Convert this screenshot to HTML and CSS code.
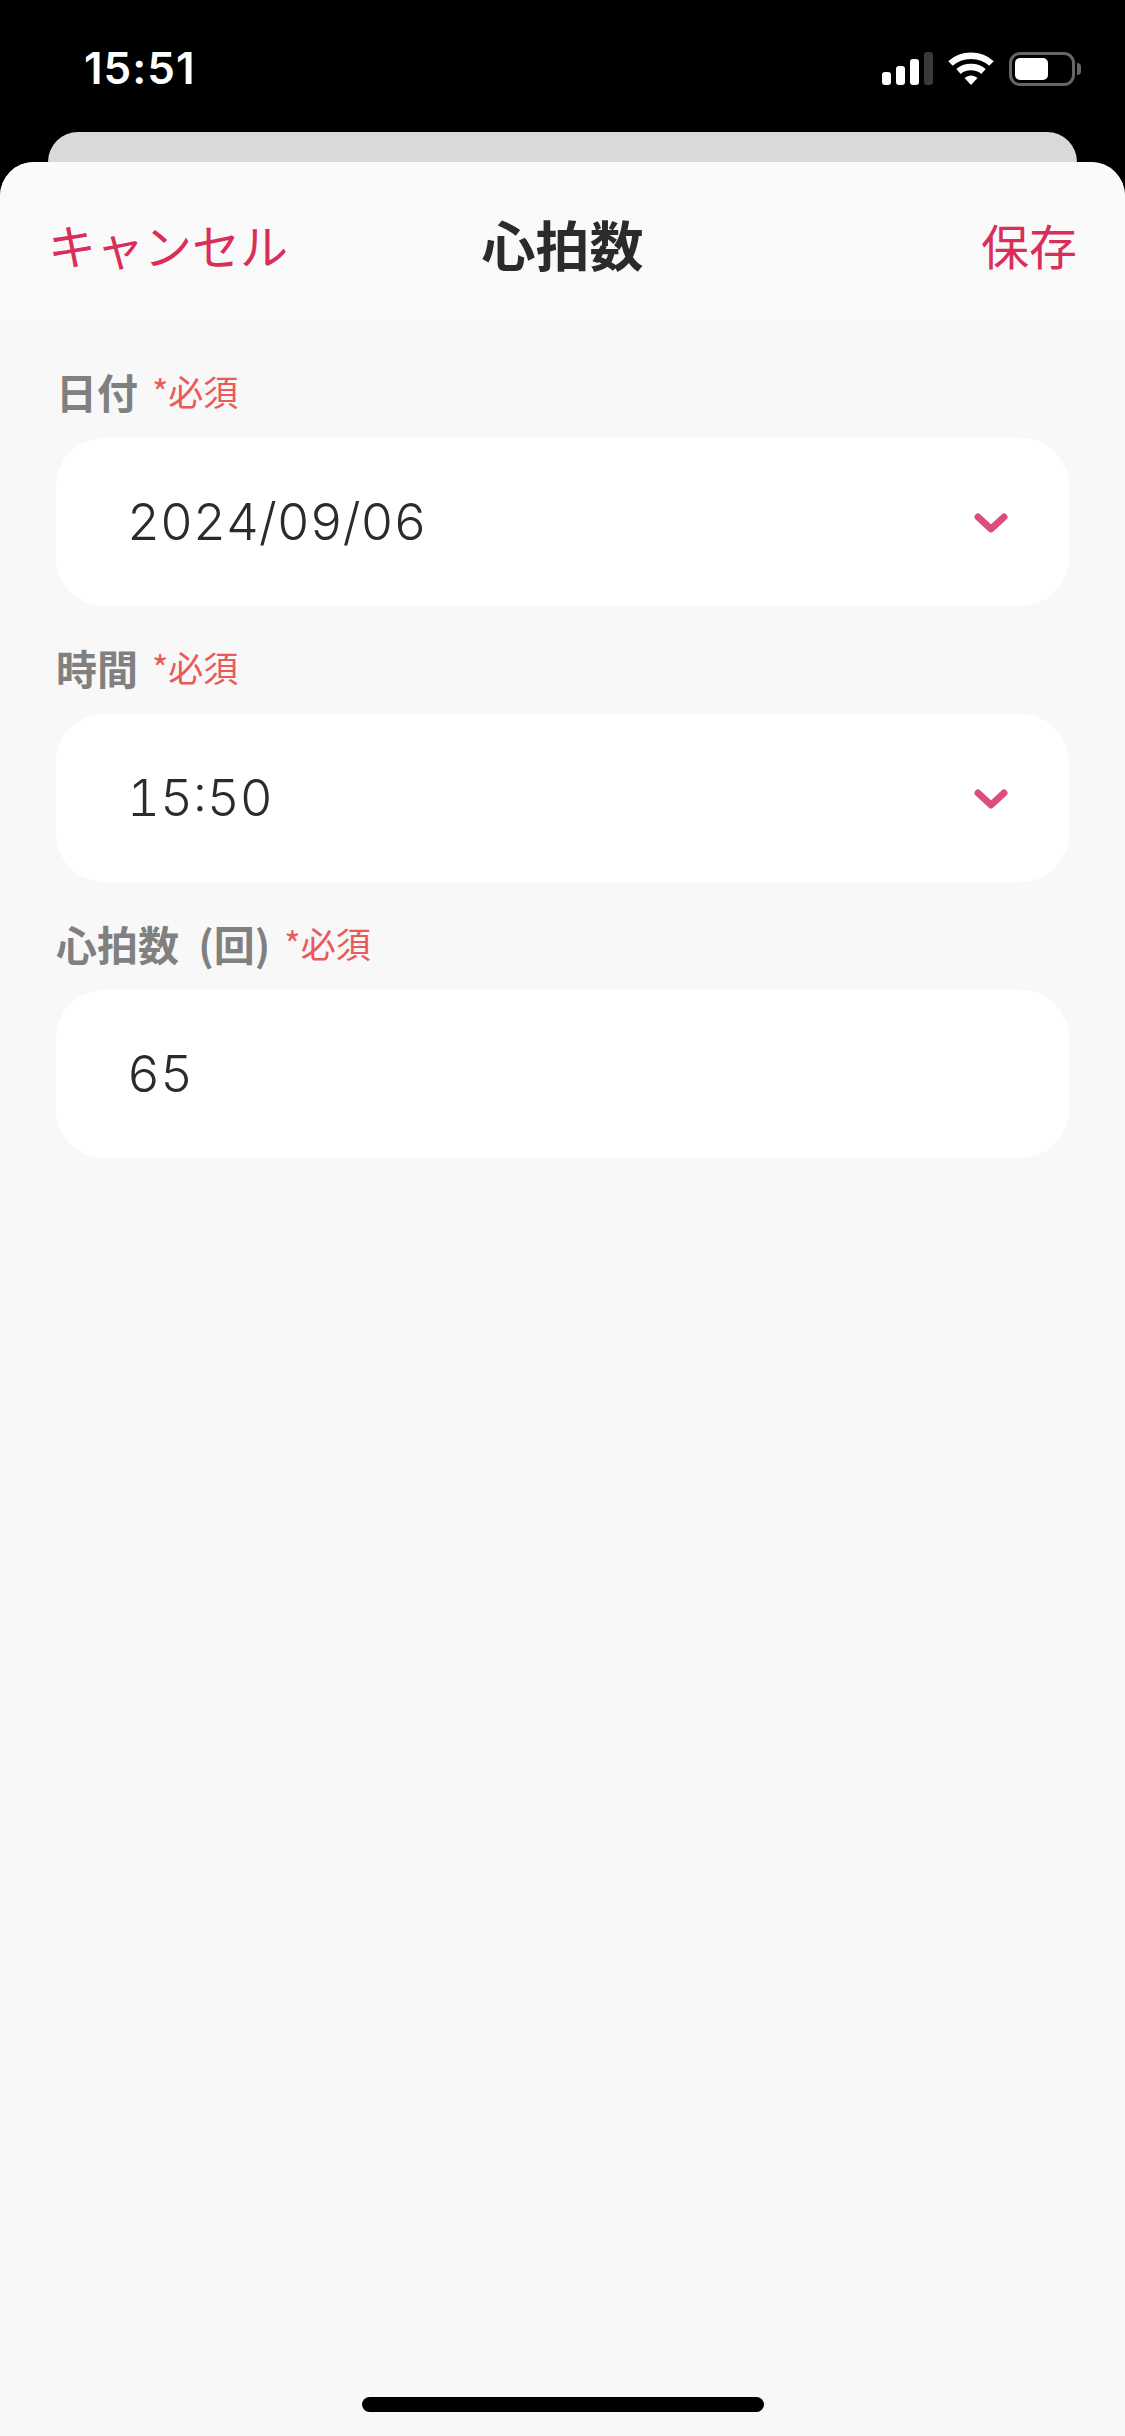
FILE: index.html
```html
<!DOCTYPE html>
<html lang="ja">
<head>
  <meta charset="utf-8">
  <title>心拍数</title>
  <link rel="stylesheet" href="styles.css">
</head>
<body>
  <div class="status">
    <span class="time">15:51</span>
    <div class="status-icons">
      <svg class="signal" width="51" height="33" viewBox="0 0 51 33">
        <rect x="0" y="20" width="9" height="13" rx="3" fill="#fff"/>
        <rect x="14" y="14" width="9" height="19" rx="3" fill="#fff"/>
        <rect x="28" y="7" width="9" height="26" rx="3" fill="#fff"/>
        <rect x="42" y="0" width="9" height="33" rx="3" fill="#3a3a3a"/>
      </svg>
      <svg class="wifi" width="46" height="33" viewBox="0 0 46 33">
        <path d="M2.500 11.500C13.500 1 32.500 1 43.500 11.500" fill="none" stroke="#fff" stroke-width="6.500"/>
        <path d="M10.500 19.500C17 13.500 29 13.500 35.500 19.500" fill="none" stroke="#fff" stroke-width="6.500"/>
        <path d="M16.500 26L23 33L29.500 26C25.500 22.500 20.500 22.500 16.500 26Z" fill="#fff"/>
      </svg>
      <div class="battery">
        <div class="battery-body"><div class="battery-level"></div></div>
        <div class="battery-tip"></div>
      </div>
    </div>
  </div>

  <div class="back-card"></div>

  <div class="sheet">
    <div class="sheet-head">
      <span class="head-btn">キャンセル</span>
      <span class="head-title">心拍数</span>
      <span class="head-btn head-save">保存</span>
    </div>

    <div class="form">
      <div class="field">
        <div class="label">日付<span class="req">*必須</span></div>
        <div class="box">
          <span class="value">2024/09/06</span>
          <svg class="chevron" width="34" height="21" viewBox="0 0 34 21">
            <path d="M4 4L17 16L30 4" fill="none" stroke="#dc4d7c" stroke-width="7" stroke-linecap="round" stroke-linejoin="round"/>
          </svg>
        </div>
      </div>
      <div class="field">
        <div class="label">時間<span class="req">*必須</span></div>
        <div class="box">
          <span class="value">15:50</span>
          <svg class="chevron" width="34" height="21" viewBox="0 0 34 21">
            <path d="M4 4L17 16L30 4" fill="none" stroke="#dc4d7c" stroke-width="7" stroke-linecap="round" stroke-linejoin="round"/>
          </svg>
        </div>
      </div>
      <div class="field">
        <div class="label">心拍数 (回)<span class="req">*必須</span></div>
        <div class="box">
          <span class="value">65</span>
        </div>
      </div>
    </div>

    <div class="home-bar"></div>
  </div>
</body>
</html>
```

FILE: styles.css
```css
html, body{
  margin: 0;
  height: 2436px;
  background-color: #000;
  overflow: hidden;
}
body{
  display: flex;
  flex-direction: column;
  font-family: Inter, "Noto Sans CJK JP", sans-serif;
}
.status{
  height: 132px;
  flex-shrink: 0;
  display: flex;
  justify-content: space-between;
  align-items: flex-start;
  box-sizing: border-box;
  padding: 52px 44px 0 84px;
}
.time{
  font-family: Inter, sans-serif;
  font-size: 44px;
  line-height: 33px;
  font-weight: 600;
  letter-spacing: 1px;
  color: #fff;
}
.status-icons{
  display: flex;
  align-items: flex-start;
}
.wifi{
  margin-left: 15px;
}
.battery{
  margin-left: 15px;
  display: flex;
  align-items: center;
}
.battery-body{
  width: 66px;
  height: 34px;
  box-sizing: border-box;
  border: 3px solid #666;
  border-radius: 11px;
  padding: 3px;
}
.battery-level{
  width: 33px;
  height: 100%;
  background-color: #fff;
  border-radius: 5px;
}
.battery-tip{
  width: 4px;
  height: 12px;
  margin-left: 2px;
  background-color: #666;
  border-radius: 0 6px 6px 0;
}
.back-card{
  height: 30px;
  flex-shrink: 0;
  margin: 0 48px;
  background-color: #d9d9d9;
  border-radius: 30px 30px 0 0;
}
.sheet{
  flex: 1;
  display: flex;
  flex-direction: column;
  background-color: #f8f8f8;
  border-radius: 34px 34px 0 0;
}
.sheet-head{
  height: 162px;
  flex-shrink: 0;
  display: grid;
  grid-template-columns: 1fr auto 1fr;
  align-items: center;
  box-sizing: border-box;
  padding: 1px 48px 0;
  background: linear-gradient(#fafafa, #f9f9f9);
  border-radius: 34px 34px 0 0;
  font-family: "Noto Sans CJK JP", sans-serif;
}
.head-btn{
  font-size: 48px;
  line-height: 110px;
  font-weight: 400;
  color: #d92e5a;
}
.head-save{
  text-align: right;
}
.head-title{
  font-size: 54px;
  line-height: 110px;
  font-weight: 700;
  color: #2b2b2b;
}
.form{
  padding: 42px 56px 0;
}
.field{
  margin-bottom: 36px;
}
.label{
  height: 54px;
  box-sizing: border-box;
  margin-bottom: 18px;
  padding-bottom: 5px;
  display: flex;
  align-items: center;
  font-family: "Noto Sans CJK JP", sans-serif;
  font-size: 41px;
  font-weight: 700;
  word-spacing: 10px;
  color: #808080;
}
.req{
  margin-left: 14px;
  font-size: 35px;
  font-weight: 400;
  color: #ea5a5a;
}
.box{
  height: 168px;
  display: flex;
  justify-content: space-between;
  align-items: center;
  box-sizing: border-box;
  padding: 0 61px 0 71px;
  background-color: #fff;
  border-radius: 48px;
}
.value{
  font-size: 51px;
  font-weight: 300;
  font-variant-numeric: tabular-nums;
  color: #2b2b2b;
  margin-top: -2px;
}
.chevron{
  margin-top: 2px;
}
.home-bar{
  width: 402px;
  height: 15px;
  flex-shrink: 0;
  margin: auto auto 24px;
  background-color: #000;
  border-radius: 8px;
}
```
